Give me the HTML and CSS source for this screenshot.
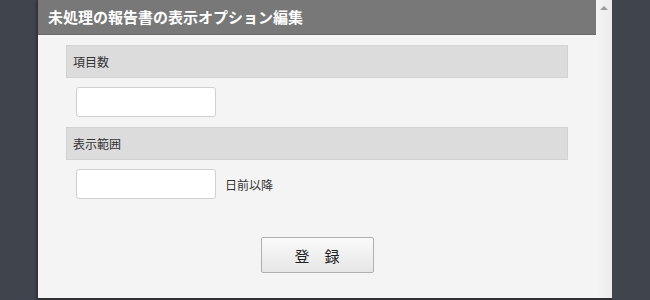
FILE: index.html
```html
<!DOCTYPE html>
<html lang="ja">
<head>
    <meta charset="UTF-8" />
    <title>未処理の報告書の表示オプション編集</title>
    <link rel="stylesheet" href="styles.css">
</head>
<body>
    <div class="dialogo">
        <div class="conteudo">
            <h1 class="titulo">未処理の報告書の表示オプション編集</h1>
            <div class="secao">項目数</div>
            <div class="linha">
                <input type="text" class="campo" />
            </div>
            <div class="secao">表示範囲</div>
            <div class="linha">
                <input type="text" class="campo" />
                <span class="sufixo">日前以降</span>
            </div>
            <div class="acoes">
                <button class="botao">登　録</button>
            </div>
        </div>
        <div class="rolagem">
            <span class="seta"></span>
        </div>
    </div>
</body>
</html>
```

FILE: styles.css
```css
body {
    margin: 0;
    background-color: #40444c;
    font-family: "Noto Sans CJK JP", "DejaVu Sans", sans-serif;
}
.dialogo {
    display: flex;
    margin-left: 38px;
    width: 574px;
    height: 298px;
    background-color: #f4f4f4;
    border-bottom: 2px solid #2e3036;
    box-shadow: -2px 0 2px rgba(0, 0, 0, 0.25);
}
.conteudo {
    width: 558px;
}
.titulo {
    margin: 0;
    height: 35px;
    line-height: 33px;
    padding-left: 10px;
    background-color: #787878;
    border-bottom: 1px solid #6a6a6a;
    box-sizing: border-box;
    color: #fff;
    font-size: 15px;
    font-weight: bold;
}
.secao {
    margin: 10px 28px 0 28px;
    height: 33px;
    line-height: 31px;
    padding-left: 6px;
    box-sizing: border-box;
    background-color: #dcdcdc;
    border: 1px solid #d2d2d2;
    font-size: 12px;
    color: #333;
}
.linha {
    display: flex;
    align-items: center;
    margin: 9px 0 0 38px;
}
.campo {
    width: 140px;
    height: 30px;
    box-sizing: border-box;
    border: 1px solid #d0d0d0;
    border-radius: 3px;
    background-color: #fff;
}
.sufixo {
    margin-left: 9px;
    font-size: 12px;
    color: #333;
}
.acoes {
    display: flex;
    justify-content: center;
    margin-top: 38px;
}
.botao {
    width: 113px;
    height: 36px;
    border: 1px solid #b0b0b0;
    border-radius: 2px;
    background: linear-gradient(#fafafa, #e6e6e6);
    font-family: "Noto Sans CJK JP", sans-serif;
    font-size: 15px;
    color: #222;
}
.rolagem {
    width: 16px;
    background: linear-gradient(to right, #f4f4f4, #ececec);
    display: flex;
    justify-content: center;
}
.seta {
    margin-top: 6px;
    width: 0;
    height: 0;
    border-left: 4px solid transparent;
    border-right: 4px solid transparent;
    border-bottom: 4px solid #9a9a9a;
}
```
